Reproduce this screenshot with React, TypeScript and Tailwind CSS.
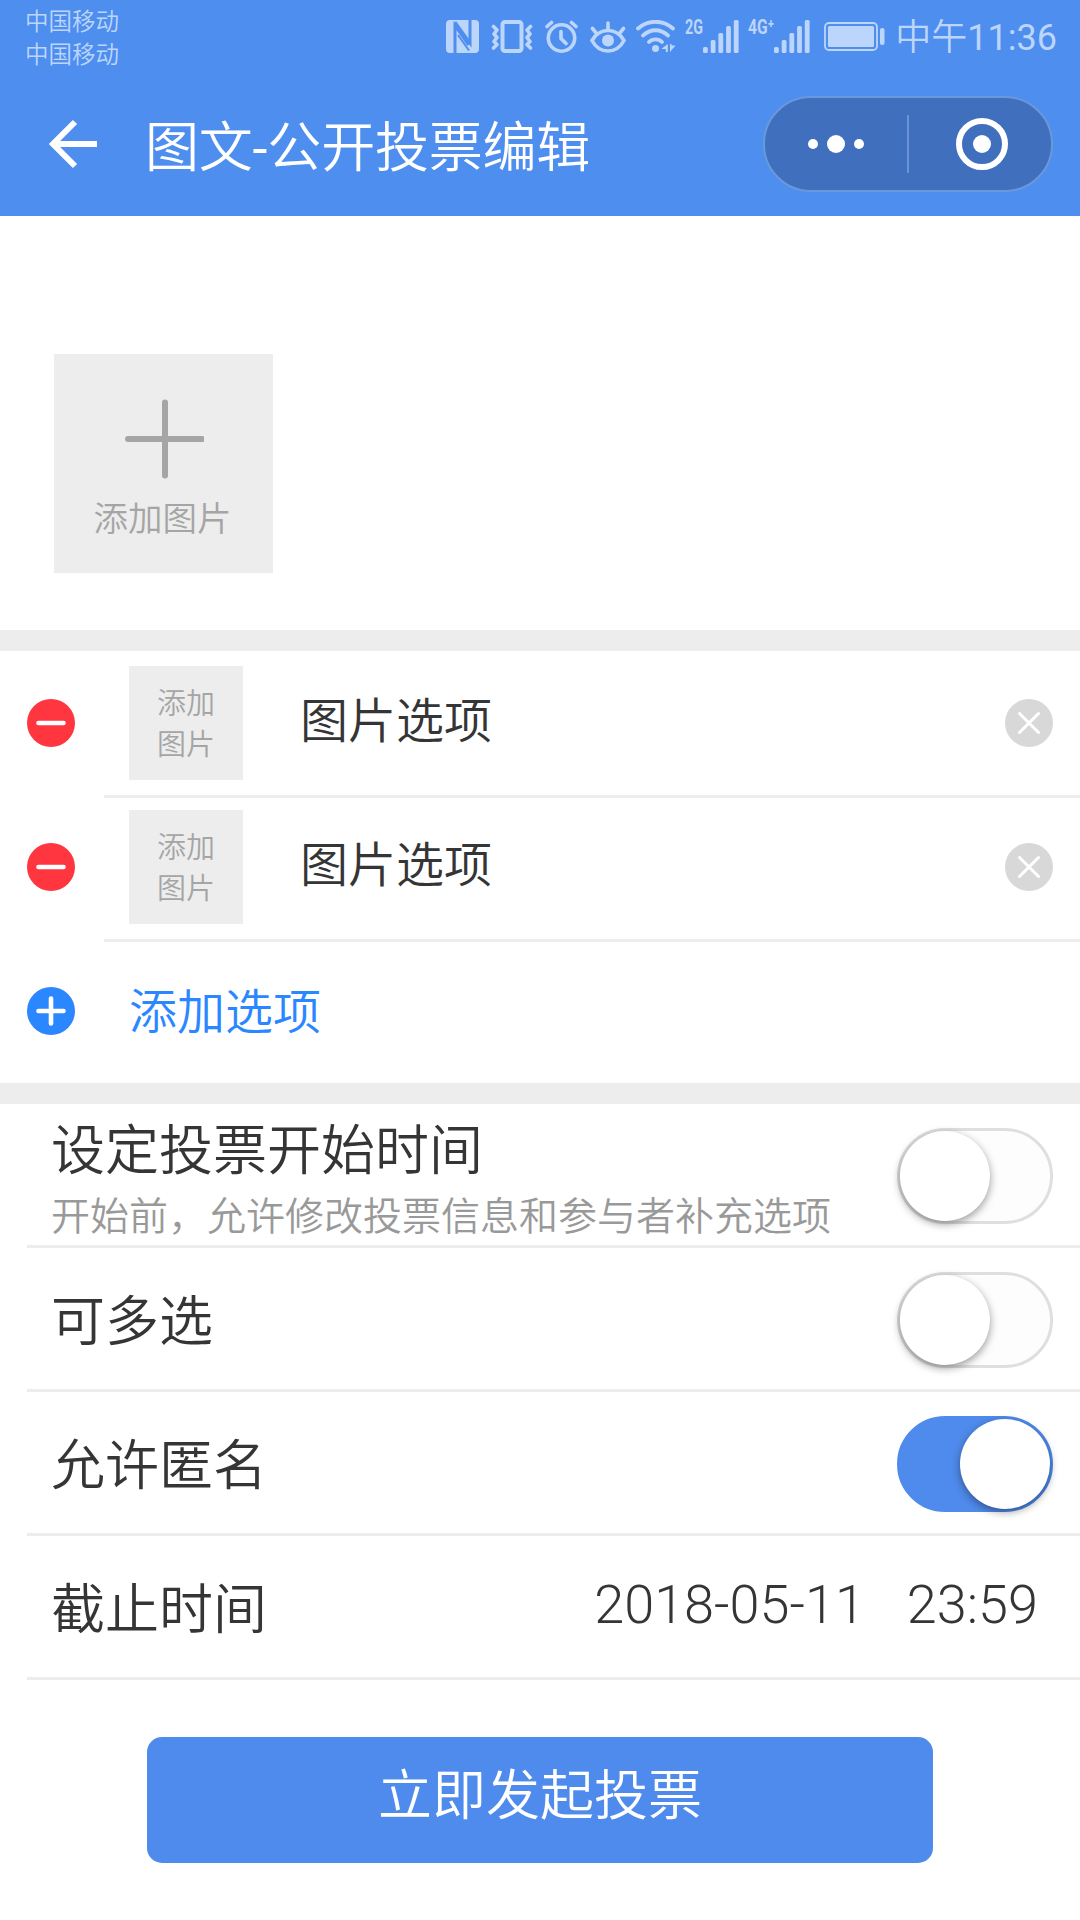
import { useState } from 'react'
import clsx from 'clsx'

const BARS = [6, 13, 20, 27, 33]

function NfcIcon() {
  return (
    <svg width="33" height="33" viewBox="0 0 33 33" fill="none">
      <rect width="33" height="33" rx="4" fill="#bcd5fb" />
      <path d="M9 34V5.500L22.500 25" stroke="#4e8eee" strokeWidth="3" />
      <path d="M24-1v24L9 2" stroke="#4e8eee" strokeWidth="3" />
      <path d="M12 15l11 15.500" stroke="#4e8eee" strokeWidth="2" />
    </svg>
  )
}

function VibrateIcon() {
  return (
    <svg width="42" height="33" viewBox="0 0 42 33" fill="none" stroke="#bcd5fb" strokeLinejoin="round" strokeLinecap="round">
      <rect x="11.500" y="2" width="19" height="29" rx="2.500" strokeWidth="4" />
      <path d="M2.500 6.500l3.500 3.500-3 4 3 3.500-3 4 3 3-3.500 3.500" strokeWidth="3.600" />
      <path d="M39.500 6.500l-3.500 3.500 3 4-3 3.500 3 4-3 3 3.500 3.500" strokeWidth="3.600" />
    </svg>
  )
}

function AlarmIcon() {
  return (
    <svg width="33" height="33" viewBox="0 0 33 33" fill="none" stroke="#bcd5fb" strokeWidth="3.600" strokeLinecap="round">
      <circle cx="16.500" cy="18" r="13.200" />
      <path d="M16 11.500v7l5 5M2 6.500l4.500-4M31 6.500l-4.500-4" />
    </svg>
  )
}

function EyeIcon() {
  return (
    <svg width="36" height="33" viewBox="0 0 36 33" fill="none" stroke="#bcd5fb" strokeWidth="3.600" strokeLinecap="round">
      <path d="M2 20.500C6 13.500 11.500 10.500 18 10.500s12 3 16 10C30 28 24.500 31 18 31S6 28 2 20.500z" />
      <circle cx="18" cy="20.500" r="6" fill="#bcd5fb" stroke="none" />
      <path d="M18 3v7M2.500 8.500L7 14M33.500 8.500L29 14" />
    </svg>
  )
}

function WifiIcon() {
  return (
    <svg width="40" height="33" viewBox="0 0 40 33" fill="none" stroke="#bcd5fb" strokeWidth="3.800" strokeLinecap="round">
      <path d="M2 8.500C12-.500 27-.500 37 8.500M7 15.500c7.500-7 17.500-7 25 0M13 22c3.500-3.500 9.500-3.500 13 0" />
      <circle cx="19.500" cy="28.500" r="3.500" fill="#bcd5fb" stroke="none" />
      <path d="M31.800 24v8h-2v-3h-4.500zM34 32v-8h1.500v1.500h4z" fill="#bcd5fb" stroke="none" />
    </svg>
  )
}

function Signal({ label, width }: { label: string; width: number }) {
  return (
    <div className="flex items-start text-[#bcd5fb]">
      <svg width={width} height="33" className="overflow-visible">
        <text
          x="0"
          y="14"
          textLength={width}
          lengthAdjust="spacingAndGlyphs"
          fontSize="20"
          fontWeight="700"
          fill="currentColor"
        >
          {label}
        </text>
      </svg>
      <svg width="36" height="33" viewBox="0 0 36 33" fill="currentColor">
        {BARS.map((h, i) => (
          <rect key={h} x={i * 7.7} y={33 - h} width="4.800" height={h} rx="1.500" />
        ))}
      </svg>
    </div>
  )
}

function BatteryIcon() {
  return (
    <svg width="61" height="29" viewBox="0 0 61 29" fill="#bcd5fb">
      <rect x="1" y="1" width="52" height="27" rx="4" fill="none" stroke="#bcd5fb" strokeWidth="1.800" />
      <rect x="4" y="4" width="46" height="21" rx="1.500" />
      <rect x="56" y="6" width="4.500" height="17" rx="2" />
    </svg>
  )
}

function StatusBar() {
  return (
    <div className="flex h-[72px] items-start justify-between pl-[25px] pr-[23px] text-[#bcd5fb]">
      <div className="flex flex-col pt-1.5 text-[23.500px] font-[350] leading-[33px]">
        <span>中国移动</span>
        <span>中国移动</span>
      </div>
      <div className="flex items-start pt-5">
        <NfcIcon />
        <div className="ml-3"><VibrateIcon /></div>
        <div className="ml-3"><AlarmIcon /></div>
        <div className="ml-3"><EyeIcon /></div>
        <div className="ml-[10px]"><WifiIcon /></div>
        <div className="ml-[9px]"><Signal label="2G" width={18} /></div>
        <div className="ml-[9px]"><Signal label="4G⁺" width={26} /></div>
        <div className="ml-[14px] pt-0.5"><BatteryIcon /></div>
        <span className="ml-[10px] text-4xl leading-[36px]">
          <span className="font-[350]">中午</span>11:36
        </span>
      </div>
    </div>
  )
}

function NavBar() {
  return (
    <div className="flex h-36 items-center pl-12 pr-[27px]">
      <button type="button" aria-label="返回">
        <svg width="50" height="50" viewBox="0 0 50 50" fill="none" stroke="white" strokeWidth="6">
          <path d="M4.500 25H49M27 3L5 25l22 22" />
        </svg>
      </button>
      <h1 className="ml-[47px] flex-1 pt-[9px] text-[54px] font-[350] leading-[72px] tracking-[-0.2px] text-white">
        图文<span className="font-normal">-</span>公开投票编辑
      </h1>
      <div className="flex h-24 w-[290px] items-center rounded-full border-2 border-[#6a98dd] bg-[#3f6fbd]">
        <button type="button" aria-label="更多" className="flex flex-1 items-center justify-center gap-[9px]">
          <span className="size-[10px] rounded-full bg-white" />
          <span className="size-[18px] rounded-full bg-white" />
          <span className="size-[10px] rounded-full bg-white" />
        </button>
        <span className="h-[58px] w-0.5 bg-[#6a94d6]" />
        <button type="button" aria-label="关闭" className="flex w-[142px] items-center justify-center pl-1">
          <span className="flex size-[52px] items-center justify-center rounded-full border-[6px] border-white">
            <span className="size-[18px] rounded-full bg-white" />
          </span>
        </button>
      </div>
    </div>
  )
}

function RoundIcon({ kind }: { kind: 'minus' | 'plus' }) {
  return (
    <svg
      width="48"
      height="48"
      viewBox="0 0 48 48"
      className={clsx('shrink-0', kind === 'minus' ? 'text-[#ff3640]' : 'text-[#2b87ff]')}
    >
      <circle cx="24" cy="24" r="24" fill="currentColor" />
      <path
        d={kind === 'minus' ? 'M11.500 24h25' : 'M11.500 24h25M24 11.500v25'}
        stroke="white"
        strokeWidth="4.600"
        strokeLinecap="round"
      />
    </svg>
  )
}

function OptionRow() {
  return (
    <div className="flex h-36 pl-[27px]">
      <div className="flex w-[77px] items-center pb-1.5">
        <RoundIcon kind="minus" />
      </div>
      <div className="flex flex-1 items-center border-b-[3px] border-[#ededed] pb-[3px] pl-[25px] pr-[27px]">
        <div className="flex h-[114px] w-[114px] items-center justify-center bg-[#ededed] pt-1">
          <span className="w-[58px] text-[29px] font-[350] leading-[41px] text-[#a5a5a5]">添加图片</span>
        </div>
        <span className="-mt-0.5 ml-[57px] flex-1 text-5xl font-[350] text-[#353535]">图片选项</span>
        <svg width="48" height="48" viewBox="0 0 48 48">
          <circle cx="24" cy="24" r="24" fill="#d8d8d8" />
          <path d="M14.500 14.500l19 19M33.500 14.500l-19 19" stroke="white" strokeWidth="3" strokeLinecap="round" />
        </svg>
      </div>
    </div>
  )
}

function Switch({ initial }: { initial: boolean }) {
  const [on, setOn] = useState(initial)
  return (
    <button
      type="button"
      role="switch"
      aria-checked={on}
      onClick={() => setOn(!on)}
      className={clsx(
        'h-24 w-[156px] shrink-0 rounded-full border-[3px]',
        on ? 'border-[#4f8bec] bg-[#4f8bec]' : 'border-[#dfdfdf] bg-[#fdfdfd]',
      )}
    >
      <span
        className={clsx(
          'block size-[90px] rounded-full bg-white shadow-[0_3px_9px_rgba(0,0,0,0.4)]',
          on && 'translate-x-[60px]',
        )}
      />
    </button>
  )
}

interface SettingProps {
  title: string
  hint?: string
  children: React.ReactNode
}

function SettingRow({ title, hint, children }: SettingProps) {
  return (
    <div className="ml-[27px] flex h-36 items-center justify-between border-b-[3px] border-[#ededed] pl-6 pr-[27px] pt-[3px]">
      <div className="flex flex-col pt-1.5 font-[350]">
        <span className="text-[54px] leading-[76px] text-[#353535]">{title}</span>
        {hint && <span className="text-[39px] leading-[54px] text-[#999]">{hint}</span>}
      </div>
      {children}
    </div>
  )
}

export default function App() {
  return (
    <div className="flex h-[1920px] w-[1080px] flex-col overflow-hidden bg-white font-[Roboto,'Noto_Sans_CJK_SC',sans-serif]">
      <header className="h-[216px] shrink-0 bg-[#4e8eee]">
        <StatusBar />
        <NavBar />
      </header>

      <section className="h-[414px] shrink-0 pl-[54px] pt-[138px]">
        <button type="button" className="flex size-[219px] flex-col items-center bg-[#ededed] pt-[45px] text-[#a5a5a5]">
          <svg width="80" height="80" viewBox="0 0 80 80" stroke="currentColor" strokeWidth="6" strokeLinecap="round">
            <path d="M41 3.500v73M4 40h74" />
          </svg>
          <span className="mt-[15px] pr-0.5 text-[34.500px] font-[350] leading-[50px]">添加图片</span>
        </button>
      </section>

      <div className="h-[21px] shrink-0 bg-[#ededed]" />

      <section className="h-[432px] shrink-0 pt-[3px]">
        <OptionRow />
        <OptionRow />
        <div className="flex h-[138px] items-center gap-[54px] pl-[27px]">
          <RoundIcon kind="plus" />
          <span className="pt-[3px] text-5xl font-[350] text-[#2b87ff]">添加选项</span>
        </div>
      </section>

      <div className="h-[21px] shrink-0 bg-[#ededed]" />

      <section className="shrink-0">
        <SettingRow title="设定投票开始时间" hint="开始前，允许修改投票信息和参与者补充选项">
          <Switch initial={false} />
        </SettingRow>
        <SettingRow title="可多选">
          <Switch initial={false} />
        </SettingRow>
        <SettingRow title="允许匿名">
          <Switch initial={true} />
        </SettingRow>
        <SettingRow title="截止时间">
          <div className="flex gap-[42px] pb-1.5 pr-[15px] text-[54px] font-light leading-[76px] text-[#353535]">
            <span>2018-05-11</span>
            <span>23:59</span>
          </div>
        </SettingRow>
      </section>

      <button
        type="button"
        className="mx-[147px] mt-[57px] flex h-[126px] shrink-0 items-center justify-center rounded-[15px] bg-[#4f8bec] pb-2 text-[54px] font-[350] text-white"
      >
        立即发起投票
      </button>
    </div>
  )
}
